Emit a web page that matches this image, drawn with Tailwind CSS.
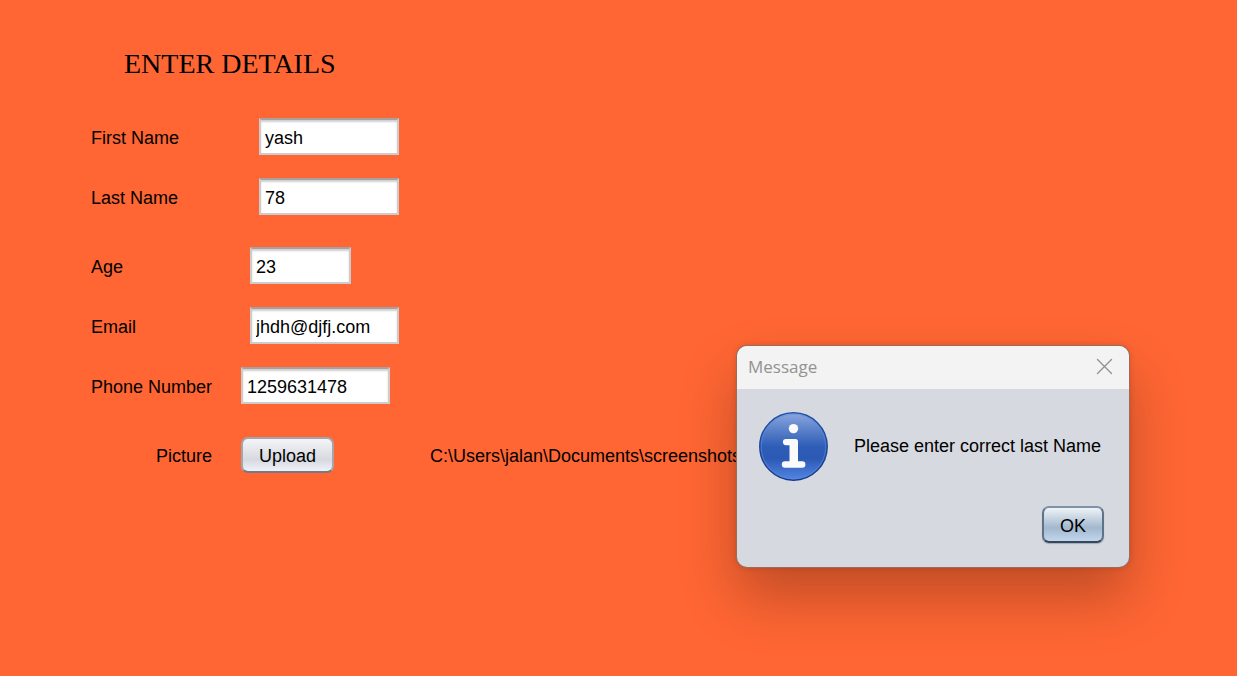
<!DOCTYPE html>
<html lang="en">
<head>
<meta charset="utf-8">
<meta name="viewport" content="width=device-width, initial-scale=1">
<title>Enter Details</title>
<script src="https://cdn.jsdelivr.net/npm/@tailwindcss/browser@4"></script>
</head>
<body class="relative min-h-screen overflow-hidden bg-[#ff6633] font-['Liberation_Sans',Arial,sans-serif] text-lg leading-6 text-black">
<main class="pt-11 pl-[91px]">
  <h1 class="pl-[33px] font-['Liberation_Serif',serif] text-[28px] leading-10">ENTER DETAILS</h1>
  <form class="mt-[34px] flex flex-col gap-[23px]">
    <div class="flex h-[37px] items-center">
      <label for="first" class="w-[168px] pt-[3px]">First Name</label>
      <input id="first" type="text" value="yash" class="h-[37px] w-[140px] border-2 border-[#cccccc] border-t-[#a8a19f] bg-white px-1 pt-[3px] shadow-[inset_0_2px_2px_#d0d0d0] outline-none">
    </div>
    <div class="flex h-[37px] items-center">
      <label for="last" class="w-[168px] pt-[3px]">Last Name</label>
      <input id="last" type="text" value="78" class="h-[37px] w-[140px] border-2 border-[#cccccc] border-t-[#a8a19f] bg-white px-1 pt-[3px] shadow-[inset_0_2px_2px_#d0d0d0] outline-none">
    </div>
    <div class="mt-[9px] flex h-[37px] items-center">
      <label for="age" class="w-[159px] pt-[3px]">Age</label>
      <input id="age" type="text" value="23" class="h-[37px] w-[101px] border-2 border-[#cccccc] border-t-[#a8a19f] bg-white px-1 pt-[3px] shadow-[inset_0_2px_2px_#d0d0d0] outline-none">
    </div>
    <div class="flex h-[37px] items-center">
      <label for="email" class="w-[159px] pt-[3px]">Email</label>
      <input id="email" type="text" value="jhdh@djfj.com" class="h-[37px] w-[149px] border-2 border-[#cccccc] border-t-[#a8a19f] bg-white px-1 pt-[3px] shadow-[inset_0_2px_2px_#d0d0d0] outline-none">
    </div>
    <div class="flex h-[37px] items-center">
      <label for="phone" class="w-[150px] pt-[3px]">Phone Number</label>
      <input id="phone" type="text" value="1259631478" class="h-[37px] w-[149px] border-2 border-[#cccccc] border-t-[#a8a19f] bg-white px-1 pt-[3px] shadow-[inset_0_2px_2px_#d0d0d0] outline-none">
    </div>
    <div class="mt-[9px] flex h-[37px] items-center">
      <label for="upload" class="w-[150px] pt-[3px] pl-[65px]">Picture</label>
      <button id="upload" type="button" class="h-9 w-[93px] self-end rounded-[7px] border-2 border-[#a3a6ad] border-b-[#747984] bg-linear-to-b from-[#f4f5f7] via-[#d6d9df] via-65% to-[#f0f2fa] pt-0.5">Upload</button>
      <output for="upload" class="pt-[3px] pl-24 whitespace-nowrap">C:\Users\jalan\Documents\screenshots</output>
    </div>
  </form>
</main>

<section role="dialog" aria-labelledby="dialog-title" class="absolute top-[346px] left-[737px] w-[392px] rounded-[10px] bg-[#d6d9e0] shadow-[0_0_0_1px_#a06a58,0_0_6px_#00000030,0_30px_56px_#00000040]">
  <header class="flex h-[43px] items-center justify-between rounded-t-[10px] bg-[#f3f3f3] pr-4 pb-0.5 pl-[11px]">
    <h2 id="dialog-title" class="font-['Open_Sans','Noto_Sans',sans-serif] text-[17px] text-[#929292]">Message</h2>
    <button type="button" aria-label="Close" class="size-[17px]">
      <svg viewBox="0 0 17 17" class="size-full" fill="none" stroke="#929292" stroke-width="1.4" stroke-linecap="round"><path d="M1.5 1.5l14 14M15.500 1.500l-14 14"/></svg>
    </button>
  </header>
  <div class="flex items-center gap-[26px] pt-[22px] pl-[21px]">
    <svg viewBox="0 0 70 70" class="size-[70px] shrink-0" aria-hidden="true">
      <defs>
        <linearGradient id="disc" x1="0" y1="0" x2="0" y2="1">
          <stop offset="0" stop-color="#8ba7df"/>
          <stop offset=".3" stop-color="#527ac5"/>
          <stop offset=".5" stop-color="#2e5db8"/>
          <stop offset=".68" stop-color="#2c59b4"/>
          <stop offset="1" stop-color="#5586e4"/>
        </linearGradient>
        <linearGradient id="rim" x1="0" y1="0" x2="0" y2="1">
          <stop offset="0" stop-color="#2450a4"/>
          <stop offset="1" stop-color="#153b86"/>
        </linearGradient>
      </defs>
      <circle cx="35.500" cy="35.500" r="33.700" fill="url(#disc)" stroke="url(#rim)" stroke-width="1.500"/>
      <circle cx="35.500" cy="35.500" r="32.300" fill="none" stroke="#5e8be0" stroke-opacity=".5" stroke-width="1.300"/>
      <circle cx="35.500" cy="17.600" r="4.700" fill="#fafafa"/>
      <path d="M28 28h9.500q2.500 0 2.500 2.500V50.300h4.200a3.200 3.200 0 0 1 0 6.400H27a3.200 3.200 0 0 1 0-6.400h4.500V34.200H28a3.100 3.100 0 0 1 0-6.200z" fill="#fafafa"/>
    </svg>
    <p class="whitespace-nowrap">Please enter correct last Name</p>
  </div>
  <div class="flex justify-end pt-[25px] pr-[25px] pb-6">
    <button type="button" class="h-[37px] w-[62px] rounded-[7px] border-2 border-[#5f7388] border-t-[#7e92a8] border-b-[#35475b] bg-linear-to-b from-[#eff3f7] via-[#a2b8cd] via-60% to-[#c2d7ed] pt-0.5 shadow-[0_1px_1px_#a6abb3]">OK</button>
  </div>
</section>
</body>
</html>
